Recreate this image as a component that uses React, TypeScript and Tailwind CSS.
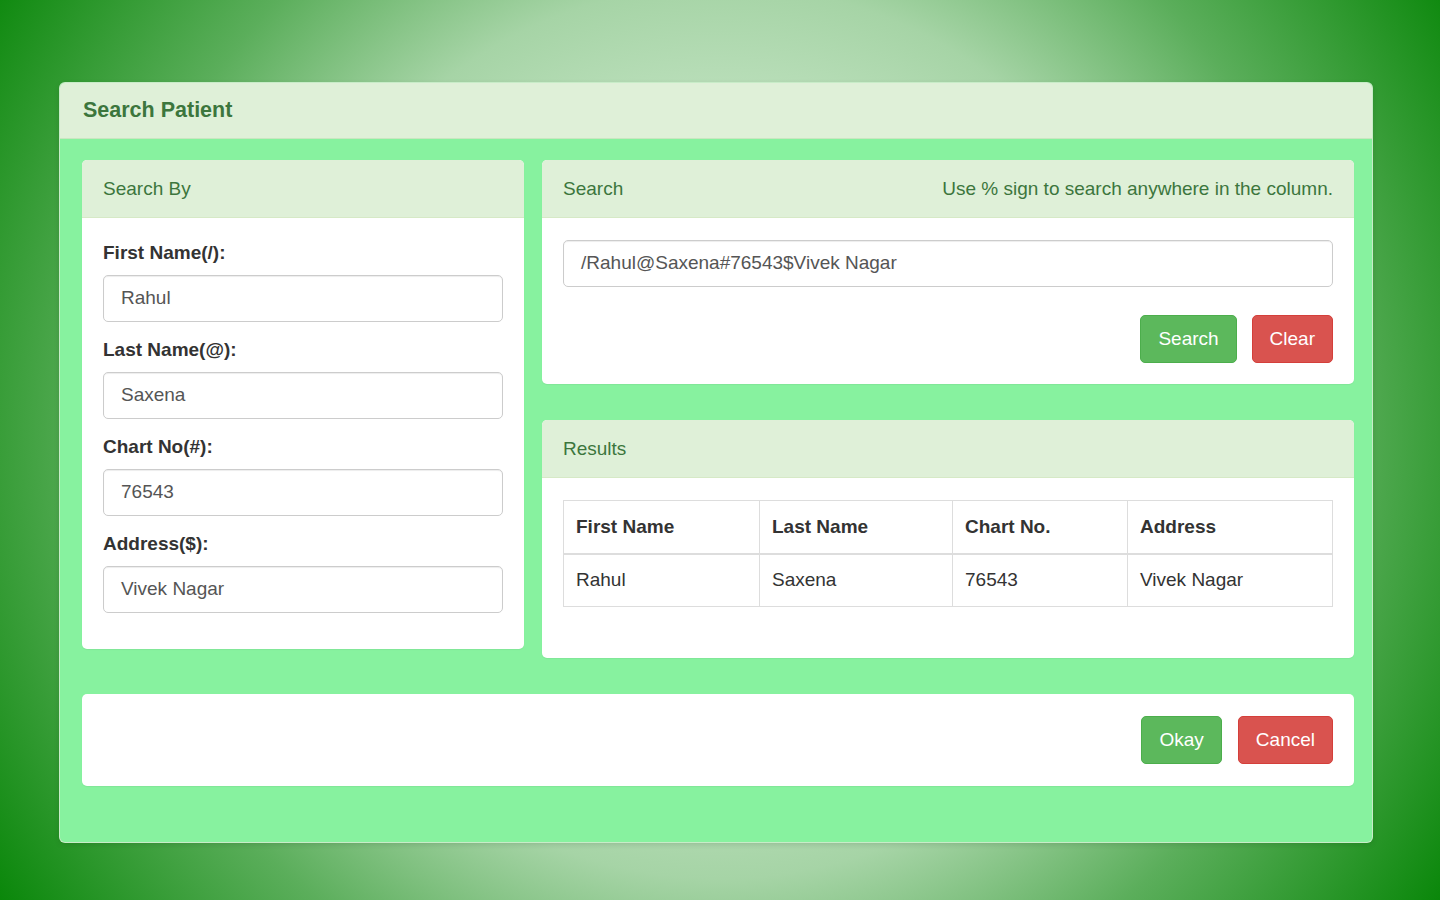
import React from 'react';

const font = { fontFamily: '"Liberation Sans", Arial, sans-serif' };

function PanelHeader({ children }: { children: React.ReactNode }) {
  return (
    <div className="h-[58px] pt-[2px] flex items-center justify-between px-[21px] bg-[#dff0d8] text-[#3c763d] text-[19px] rounded-t-[5px] border-b border-[#d6e9c6]">
      {children}
    </div>
  );
}

function Field({ label, value }: { label: string; value: string }) {
  return (
    <div className="mb-[15px]">
      <label className="block text-[19px] leading-[26px] font-bold text-[#333] mb-[9px]">{label}</label>
      <div className="h-[47px] flex items-center px-[17px] border border-[#ccc] rounded-[5px] shadow-[inset_0_1px_1px_rgba(0,0,0,0.075)] text-[19px] text-[#555] bg-white">
        {value}
      </div>
    </div>
  );
}

function Btn({ color, children }: { color: 'green' | 'red'; children: React.ReactNode }) {
  const cls =
    color === 'green'
      ? 'bg-[#5cb85c] border-[#4cae4c]'
      : 'bg-[#d9534f] border-[#d43f3a]';
  return (
    <button className={`h-[48px] px-[17px] border rounded-[5px] text-white text-[19px] ${cls}`}>
      {children}
    </button>
  );
}

export default function App() {
  const cols = ['First Name', 'Last Name', 'Chart No.', 'Address'];
  const row = ['Rahul', 'Saxena', '76543', 'Vivek Nagar'];
  const widths = ['w-[196px]', 'w-[193px]', 'w-[175px]', ''];

  return (
    <div
      style={font}
      className="w-[1440px] h-[900px] bg-[radial-gradient(circle_at_50%_48%,#eef7ee_0%,#c8e6c8_30%,#a6d4a6_52%,#5bae5b_72%,#0a870a_100%)] pt-[83px] pl-[60px]"
    >
      <div className="w-[1312px] h-[759px] rounded-[5px] bg-[#87f29f] shadow-[0_0_0_1px_#c8ecc8,0_2px_6px_rgba(0,0,0,0.15)] overflow-hidden">
        <div className="h-[56px] flex items-center px-[23px] bg-[#dff0d8] border-b border-[#c9e6c0]">
          <h1 className="text-[21.5px] font-bold text-[#3c763d]">Search Patient</h1>
        </div>

        <div className="pt-[21px] pl-[22px] pr-[18px]">
          <div className="flex items-start gap-[18px]">
            {/* Search By */}
            <div className="w-[442px] bg-white rounded-[5px] shadow-[0_1px_1px_rgba(0,0,0,0.05)]">
              <PanelHeader>Search By</PanelHeader>
              <div className="pt-[22px] px-[21px] pb-[21px]">
                <Field label="First Name(/):" value="Rahul" />
                <Field label="Last Name(@):" value="Saxena" />
                <Field label="Chart No(#):" value="76543" />
                <Field label="Address($):" value="Vivek Nagar" />
              </div>
            </div>

            <div className="w-[812px] flex flex-col gap-[36px]">
              {/* Search */}
              <div className="bg-white rounded-[5px] shadow-[0_1px_1px_rgba(0,0,0,0.05)]">
                <PanelHeader>
                  <span>Search</span>
                  <span>Use % sign to search anywhere in the column.</span>
                </PanelHeader>
                <div className="p-[21px] pt-[22px]">
                  <div className="h-[47px] flex items-center px-[17px] border border-[#ccc] rounded-[5px] shadow-[inset_0_1px_1px_rgba(0,0,0,0.075)] text-[19px] text-[#555]">
                    /Rahul@Saxena#76543$Vivek Nagar
                  </div>
                  <div className="flex justify-end gap-[15px] mt-[28px]">
                    <Btn color="green">Search</Btn>
                    <Btn color="red">Clear</Btn>
                  </div>
                </div>
              </div>

              {/* Results */}
              <div className="bg-white rounded-[5px] shadow-[0_1px_1px_rgba(0,0,0,0.05)]">
                <PanelHeader>Results</PanelHeader>
                <div className="pt-[22px] px-[21px] pb-[51px]">
                  <table className="w-full border-collapse text-[19px] text-[#333]">
                    <thead>
                      <tr>
                        {cols.map((c, i) => (
                          <th
                            key={c}
                            className={`h-[53px] text-left font-bold px-[12px] border border-[#ddd] border-b-2 ${widths[i]}`}
                          >
                            {c}
                          </th>
                        ))}
                      </tr>
                    </thead>
                    <tbody>
                      <tr>
                        {row.map((c) => (
                          <td key={c} className="h-[53px] px-[12px] border border-[#ddd]">
                            {c}
                          </td>
                        ))}
                      </tr>
                    </tbody>
                  </table>
                </div>
              </div>
            </div>
          </div>

          {/* Footer */}
          <div className="mt-[36px] h-[92px] bg-white rounded-[5px] flex items-center justify-end gap-[16px] px-[21px] shadow-[0_1px_1px_rgba(0,0,0,0.05)]">
            <Btn color="green">Okay</Btn>
            <Btn color="red">Cancel</Btn>
          </div>
        </div>
      </div>
    </div>
  );
}
